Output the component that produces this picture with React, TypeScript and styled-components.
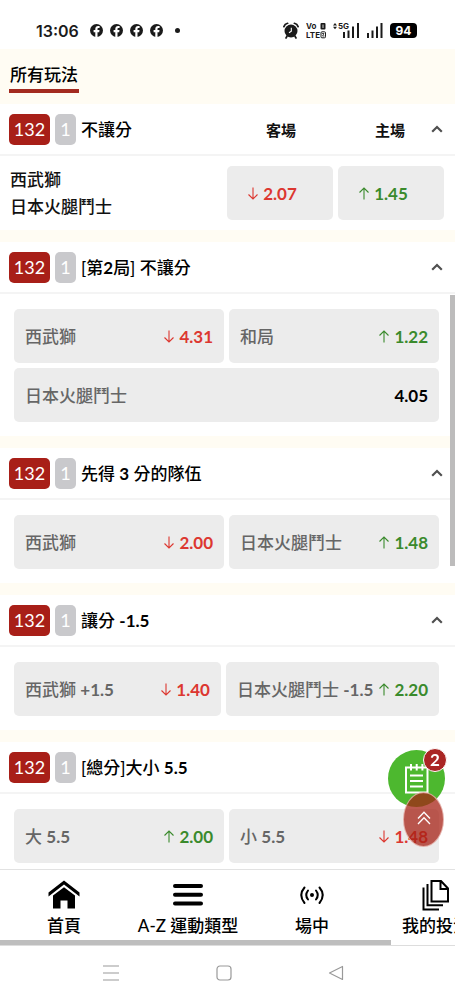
import React from 'react';
import styled, { createGlobalStyle } from 'styled-components';

const GlobalStyle = createGlobalStyle`
  * { box-sizing: border-box; }
  body {
    margin: 0;
    background: #fff;
    color: #111;
    font-family: Lato, "Noto Sans CJK TC", sans-serif;
    font-size: 17px;
    font-weight: 500;
  }
  button { font: inherit; color: inherit; border: 0; padding: 0; background: none; cursor: pointer; }
  h1, h2, p { margin: 0; font: inherit; }
  svg { display: block; flex: none; }
`;

const Screen = styled.div`
  height: 100vh;
  display: flex;
  flex-direction: column;
  overflow: hidden;
`;

/* Status bar */
const StatusBar = styled.header`
  flex: none;
  display: flex;
  align-items: center;
  justify-content: space-between;
  height: 49px;
  padding: 12px 38px 0 36px;
  color: #1b1b1b;
  font-family: Inter, sans-serif;
`;
const StatusGroup = styled.div`
  display: flex;
  align-items: center;
  gap: 7px;
`;
const Clock = styled.time`
  margin-right: 4px;
  font-size: 16px;
  font-weight: 600;
`;
const Dot = styled.span`
  width: 5px;
  height: 5px;
  margin-left: 5px;
  border-radius: 50%;
  background: #1b1b1b;
`;
const Battery = styled.span`
  width: 27px;
  height: 15px;
  border-radius: 4px;
  background: #000;
  color: #fff;
  font-size: 12px;
  line-height: 15px;
  font-weight: 700;
  text-align: center;
`;

/* Scrolling list of markets */
const Viewport = styled.div`
  position: relative;
  flex: 1;
  min-height: 0;
`;
const Markets = styled.main`
  height: 100%;
  overflow-y: auto;
  scrollbar-width: none;
  background: #fffcf3;
`;
const ScrollThumb = styled.div`
  position: absolute;
  top: 30%;
  right: 0;
  width: 5px;
  height: 33%;
  background: #bdbcbc;
`;
const Tabs = styled.nav`
  height: 55px;
  padding: 11px 9px 0;
`;
const Tab = styled.button`
  && {
    height: 33px;
    padding: 0 1px;
    border-bottom: 4px solid #a32a20;
    line-height: 26px;
    font-weight: 500;
    color: #000;
  }
`;
const Card = styled.section`
  margin-bottom: 12px;
  background: #fff;
`;
const CardHeader = styled.div`
  display: flex;
  align-items: center;
  height: 52px;
  padding: 0 12px 0 9px;
  border-bottom: 2px solid #f4f4f4;
`;
const Code = styled.span`
  width: 41px;
  height: 31px;
  margin-right: 5px;
  border-radius: 5px;
  background: #a81f18;
  color: #fff;
  font-size: 18px;
  line-height: 31px;
  font-weight: 400;
  text-align: center;
`;
const Count = styled(Code)`
  width: 21px;
  background: #c9c9cc;
`;
const Title = styled.h2`
  flex: 1;
  padding-bottom: 2px;
  white-space: pre;
  color: #000;
`;
const Latin = styled.span`
  font-weight: 700;
`;
const Side = styled.span`
  width: 60px;
  margin-right: 49px;
  font-size: 15px;
  font-weight: 700;
  text-align: center;
  color: #111;
  &:last-of-type { margin-right: 11px; }
`;
const TeamBody = styled.div`
  display: flex;
  align-items: center;
  justify-content: space-between;
  padding: 10px 11px 10px 10px;
`;
const Teams = styled.div`
  line-height: 27px;
`;
const Pair = styled.div`
  flex: 0 1 217px;
  display: flex;
  gap: 5px;
`;
const Options = styled.div`
  display: flex;
  flex-direction: column;
  gap: 5px;
  padding: 15px 16px 14px 14px;
`;
const OptionRow = styled.div`
  display: flex;
  gap: 5px;
`;
const Option = styled.button<{ $center?: boolean }>`
  && {
    flex: 1 1 0;
    display: flex;
    align-items: center;
    justify-content: ${(p) => (p.$center ? 'center' : 'space-between')};
    gap: 5px;
    height: 54px;
    padding: ${(p) => (p.$center ? '0 16px 0 0' : '0 11px')};
    border-radius: 5px;
    background: #ececec;
    white-space: nowrap;
    color: #666;
  }
`;
const OptionName = styled.span`
  padding-bottom: 2px;
`;
const trendColor = { up: '#3a8a2c', down: '#dc3730', flat: '#000' };
type Trend = keyof typeof trendColor;
const Price = styled.span<{ $trend: Trend }>`
  display: flex;
  align-items: center;
  gap: 4px;
  font-weight: 700;
  color: ${(p) => trendColor[p.$trend]};
`;

/* Floating buttons */
const SlipButton = styled.button`
  && {
    position: absolute;
    right: 10px;
    bottom: 62px;
    width: 57px;
    height: 57px;
    display: grid;
    place-items: center;
    border-radius: 50%;
    background: #4db82f;
    color: #fff;
  }
`;
const SlipCount = styled.span`
  position: absolute;
  top: -2px;
  right: -2px;
  width: 24px;
  height: 24px;
  border: 1px solid #fff;
  border-radius: 50%;
  background: #aa2624;
  line-height: 22px;
  font-weight: 700;
`;
const TopButton = styled.button`
  && {
    position: absolute;
    right: 11px;
    bottom: 22px;
    width: 41px;
    height: 55px;
    display: grid;
    place-items: center;
    padding-bottom: 4px;
    border: 1px solid rgba(255, 235, 230, 0.6);
    border-radius: 50%;
    background: rgba(166, 32, 20, 0.74);
    color: #fff;
  }
`;

/* Bottom navigation */
const BottomNav = styled.nav`
  flex: none;
  display: flex;
  height: 71px;
  padding-left: 2px;
  border-top: 1px solid #e2e2e2;
  overflow: hidden;
`;
const NavItem = styled.button`
  && {
    flex: 0 0 124px;
    display: flex;
    flex-direction: column;
    align-items: center;
    justify-content: space-between;
    padding: 9px 0 2px;
    color: #000;
    line-height: 24px;
    white-space: nowrap;
  }
`;
const NavTrack = styled.div`
  flex: none;
  height: 6px;
  border-bottom: 1px solid #ddd;
`;
const NavThumb = styled.div`
  width: 86%;
  height: 5px;
  background: #bebebe;
`;
const SystemNav = styled.footer`
  flex: none;
  display: flex;
  align-items: center;
  justify-content: space-between;
  height: 54px;
  padding: 0 111px 0 103px;
  color: #999;
`;

const FacebookIcon = () => (
  <svg width="13" height="13" viewBox="0 0 13 13">
    <circle cx="6.5" cy="6.5" r="6.5" fill="#1b1b1b" />
    <path d="M5.300 13V8.200H3.600V6.100h1.700V5c0-2 1.100-3 2.800-3h1.500v2h-1c-.8 0-1.100.4-1.100 1v1.100h2L9.200 8.200H7.500V13z" fill="#fff" />
  </svg>
);
const AlarmIcon = () => (
  <svg width="16" height="17" viewBox="0 0 16 17">
    <circle cx="8" cy="9" r="6.5" fill="#1b1b1b" />
    <path d="M.9 4.600Q1.800 2 4.600 1.300M15.100 4.600Q14.200 2 11.400 1.300M4 14.300l-1 1.700M12 14.300l1 1.700" fill="none" stroke="#1b1b1b" strokeWidth="1.700" strokeLinecap="round" />
    <path d="M8.300 5.800V9.300L6 10.800" fill="none" stroke="#fff" strokeWidth="1.100" />
  </svg>
);
const VolteIcon = () => (
  <svg width="20" height="17" viewBox="0 0 20 17" fontFamily="Inter, sans-serif" fontWeight="700" fontSize="8" fill="#1b1b1b">
    <text x="0" y="7">Vo</text>
    <text x="0" y="16">LTE</text>
    <rect x="14.500" y="1" width="5" height="6.500" rx="1" />
    <rect x="15" y="9.800" width="4.500" height="6" rx="1" fill="none" stroke="#1b1b1b" />
    <path d="M17 2.500v3.500" stroke="#fff" strokeWidth=".8" />
    <path d="M16 11.500h2l-1.500 2.500h2" fill="none" stroke="#1b1b1b" strokeWidth=".8" />
  </svg>
);
const FiveGIcon = () => (
  <svg width="27" height="17" viewBox="0 0 27 17" fill="#1b1b1b">
    <path d="M0 3.500 2 1l2 2.500zM0 4.800h4L2 7.300z" />
    <text x="5" y="6.500" fontFamily="Inter, sans-serif" fontWeight="700" fontSize="8">5G</text>
    <path d="M11 16v-6M15.500 16V8.500M20 16V4.500M25 16V1" stroke="#1b1b1b" strokeWidth="2" />
  </svg>
);
const SignalIcon = () => (
  <svg width="16" height="17" viewBox="0 0 16 17">
    <path d="M1 16v-5M5.500 16V8.500M10 16V4.500M14.500 16V1" stroke="#1b1b1b" strokeWidth="2" />
  </svg>
);
const ChevronUp = () => (
  <svg width="12" height="8" viewBox="0 0 12 8" fill="none" stroke="#505050" strokeWidth="2.200">
    <path d="M1.200 6.800 6 2l4.800 4.800" />
  </svg>
);
const Arrow = ({ up }: { up: boolean }) => (
  <svg width="12" height="13" viewBox="0 0 12 13" fill="none" stroke="currentColor" strokeWidth="1.100">
    {up ? <path d="M6 12.500V1M1.500 5.500 6 1l4.500 4.500" /> : <path d="M6 .5V12M1.500 7.500 6 12l4.500-4.500" />}
  </svg>
);
const NotepadIcon = () => (
  <svg width="24" height="31" viewBox="0 0 24 31" fill="none" stroke="#fff" strokeWidth="2">
    <path d="M1 4.500h21.500V29.500H1zM6 1v6.500M11.700 1v6.500M17.400 1v6.500M5 12.500h13M5 18h13M5 23.500h13" />
  </svg>
);
const DoubleChevron = () => (
  <svg width="14" height="14" viewBox="0 0 14 14" fill="none" stroke="#fff" strokeWidth="1.300">
    <path d="M1 7.500 7 1.200l6 6.300M1 13 7 6.700l6 6.300" />
  </svg>
);
const HomeIcon = () => (
  <svg width="32" height="32" viewBox="0 0 32 32">
    <path d="M.5 13.500 16 1.500l15.500 12v4L16 5.500.5 17.500z" />
    <path d="M16 8.200 27 16.500V29.500h-7.500v-8h-7v8H5V16.500z" />
  </svg>
);
const MenuIcon = () => (
  <svg width="32" height="32" viewBox="0 0 32 32" stroke="#000" strokeWidth="4" strokeLinecap="round">
    <path d="M3 7h26M3 15.700h26M3 24.500h26" />
  </svg>
);
const LiveIcon = () => (
  <svg width="32" height="32" viewBox="0 0 32 32" fill="none" stroke="#000" strokeWidth="2" strokeLinecap="round">
    <circle cx="16" cy="16" r="2" fill="#000" stroke="none" />
    <path d="M12 11.500q-3.500 4.500 0 9M20 11.500q3.500 4.500 0 9M8.500 8.500q-6.500 7.500 0 15.500M23.500 8.500q6.500 7.500 0 15.500" />
  </svg>
);
const FilesIcon = () => (
  <svg width="32" height="32" viewBox="0 0 32 32" fill="none" stroke="#000" strokeWidth="2">
    <path d="M11.500 2h9.500l7 7.500v13H11.500zM20.500 2v8H28M7.500 5v21.300H23M3.500 8.500v22H19" />
  </svg>
);

type Pick = { name: string; trend: Trend; price: string };
type Market = { title: string; rows: Pick[][] };

const markets: Market[] = [
  {
    title: '[第2局] 不讓分',
    rows: [
      [
        { name: '西武獅', trend: 'down', price: '4.31' },
        { name: '和局', trend: 'up', price: '1.22' },
      ],
      [{ name: '日本火腿鬥士', trend: 'flat', price: '4.05' }],
    ],
  },
  {
    title: '先得 3 分的隊伍',
    rows: [[
      { name: '西武獅', trend: 'down', price: '2.00' },
      { name: '日本火腿鬥士', trend: 'up', price: '1.48' },
    ]],
  },
  {
    title: '讓分 -1.5',
    rows: [[
      { name: '西武獅 +1.5', trend: 'down', price: '1.40' },
      { name: '日本火腿鬥士 -1.5', trend: 'up', price: '2.20' },
    ]],
  },
  {
    title: '[總分]大小 5.5',
    rows: [[
      { name: '大 5.5', trend: 'up', price: '2.00' },
      { name: '小 5.5', trend: 'down', price: '1.48' },
    ]],
  },
];

const navItems = [
  { label: '首頁', icon: <HomeIcon /> },
  { label: 'A-Z 運動類型', icon: <MenuIcon /> },
  { label: '場中', icon: <LiveIcon /> },
  { label: '我的投注', icon: <FilesIcon /> },
];

/* Numbers inside a Chinese label are set heavier than the characters */
const Mixed = ({ text }: { text: string }) => (
  <>
    {text.split(/([+-]?\d[\d.]*)/).map((part, i) => (i % 2 ? <Latin key={i}>{part}</Latin> : part))}
  </>
);

const Odds = ({ trend, price }: { trend: Trend; price: string }) => (
  <Price $trend={trend}>
    {trend !== 'flat' && <Arrow up={trend === 'up'} />}
    {price}
  </Price>
);

const Header = ({ title, sides = [] }: { title: string; sides?: string[] }) => (
  <CardHeader>
    <Code>132</Code>
    <Count>1</Count>
    <Title><Mixed text={title} /></Title>
    {sides.map((side) => <Side key={side}>{side}</Side>)}
    <button aria-label="收合"><ChevronUp /></button>
  </CardHeader>
);

export default function App() {
  return (
    <Screen>
      <GlobalStyle />
      <StatusBar>
        <StatusGroup>
          <Clock>13:06</Clock>
          <FacebookIcon />
          <FacebookIcon />
          <FacebookIcon />
          <FacebookIcon />
          <Dot />
        </StatusGroup>
        <StatusGroup>
          <AlarmIcon />
          <VolteIcon />
          <FiveGIcon />
          <SignalIcon />
          <Battery>94</Battery>
        </StatusGroup>
      </StatusBar>

      <Viewport>
        <Markets>
          <Tabs><Tab>所有玩法</Tab></Tabs>
          <Card>
            <Header title="不讓分" sides={['客場', '主場']} />
            <TeamBody>
              <Teams>
                <p>西武獅</p>
                <p>日本火腿鬥士</p>
              </Teams>
              <Pair>
                <Option $center><Odds trend="down" price="2.07" /></Option>
                <Option $center><Odds trend="up" price="1.45" /></Option>
              </Pair>
            </TeamBody>
          </Card>
          {markets.map((market) => (
            <Card key={market.title}>
              <Header title={market.title} />
              <Options>
                {market.rows.map((row, i) => (
                  <OptionRow key={i}>
                    {row.map((pick) => (
                      <Option key={pick.name}>
                        <OptionName><Mixed text={pick.name} /></OptionName>
                        <Odds trend={pick.trend} price={pick.price} />
                      </Option>
                    ))}
                  </OptionRow>
                ))}
              </Options>
            </Card>
          ))}
        </Markets>
        <ScrollThumb />
        <SlipButton aria-label="投注單">
          <NotepadIcon />
          <SlipCount>2</SlipCount>
        </SlipButton>
        <TopButton aria-label="回到頂部"><DoubleChevron /></TopButton>
      </Viewport>

      <BottomNav>
        {navItems.map((item) => (
          <NavItem key={item.label}>
            {item.icon}
            {item.label}
          </NavItem>
        ))}
      </BottomNav>
      <NavTrack><NavThumb /></NavTrack>
      <SystemNav>
        <button aria-label="最近">
          <svg width="16" height="16" viewBox="0 0 16 16" stroke="currentColor" strokeWidth="1.200"><path d="M0 1h16M0 8h16M0 15h16" /></svg>
        </button>
        <button aria-label="主畫面">
          <svg width="16" height="16" viewBox="0 0 16 16" fill="none" stroke="currentColor" strokeWidth="1.200"><rect x="1" y="1" width="14" height="14" rx="3" /></svg>
        </button>
        <button aria-label="返回">
          <svg width="16" height="16" viewBox="0 0 16 16" fill="none" stroke="currentColor" strokeWidth="1.200" strokeLinejoin="round"><path d="M14.500 1.500v13L1.500 8z" /></svg>
        </button>
      </SystemNav>
    </Screen>
  );
}
